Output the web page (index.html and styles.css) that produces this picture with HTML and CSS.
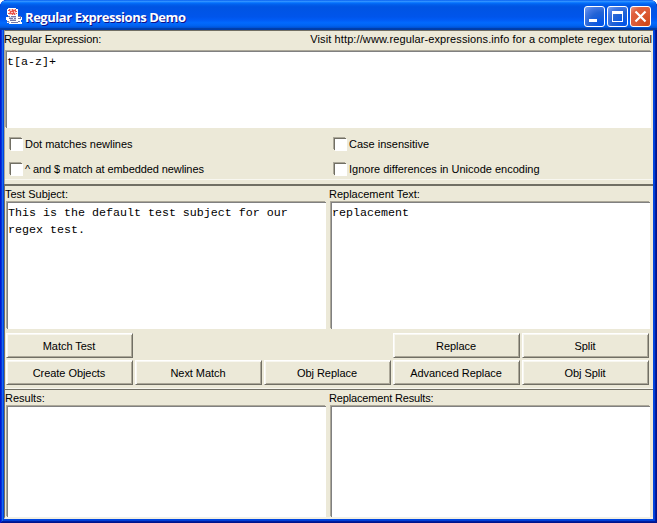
FILE: index.html
```html
<!DOCTYPE html>
<html lang="en">
<head>
<meta charset="utf-8">
<title>Regular Expressions Demo</title>
<link rel="stylesheet" href="styles.css">
</head>
<body>
<main class="window">
  <header class="titlebar">
    <svg class="app-icon" width="16" height="16" viewBox="0 0 16 16" shape-rendering="crispEdges">
      <path fill="#fff" d="M2 0h8v1h2v7h3v1h1v3h-1v2h1v2H3v-1H1v-3H0V9h2V7H1V1h1z"/>
      <path fill="#f8c4c0" d="M3 1h7v6H3z"/>
      <path fill="none" stroke="#e8544c" d="M2 2.500h2M3.500 1v2M2 5.500h2M6.500 1v2h-2v2h2v2M9.500 1v1h-2v3h1v2M9 3.500h2M10 5.500h1"/>
      <path fill="none" stroke="#7778a5" d="M2 8.500h2M5 8.500h5M12 8.500h2v2h-2M3 10.500h4M8 10.500h2M4 12.500h6M1 13.500h2M5 14.500h7M12 13.500h2"/>
      <path fill="#c4c4dd" d="M3 9h7v1H3zM4 11h6v1H4zM2 14h2v1H2z"/>
    </svg>
    <h1 class="title">Regular Expressions Demo</h1>
    <div class="controls">
      <span class="control"><svg width="21" height="21"><path fill="#fff" d="M5 13h8v3H5z"/></svg></span>
      <span class="control"><svg width="21" height="21"><path fill="#fff" fill-rule="evenodd" d="M5 5h11v11H5zM6 8v7h9V8z"/></svg></span>
      <span class="control close"><svg width="21" height="21"><path stroke="#fff" stroke-width="2.200" d="M5.500 5.500l10 10M15.500 5.500l-10 10"/></svg></span>
    </div>
  </header>
  <div class="content">
    <section class="pattern">
      <div class="heading"><span class="l-regex">Regular Expression:</span><span class="l-visit">Visit http://www.regular-expressions.info for a complete regex tutorial</span></div>
      <div class="field regex">t[a-z]+</div>
      <div class="options">
        <label class="option"><i class="box"></i><span>Dot matches newlines</span></label>
        <label class="option"><i class="box"></i><span>Case insensitive</span></label>
        <label class="option"><i class="box"></i><span class="l-caret">^ and $ match at embedded newlines</span></label>
        <label class="option"><i class="box"></i><span>Ignore differences in Unicode encoding</span></label>
      </div>
    </section>
    <section class="subject">
      <div class="pair">
        <div class="cell"><div class="label">Test Subject:</div><div class="field">This is the default test subject for our<br>regex test.</div></div>
        <div class="cell"><div class="label">Replacement Text:</div><div class="field">replacement</div></div>
      </div>
      <div class="buttons">
        <button>Match Test</button><span></span><span></span><button>Replace</button><button>Split</button>
        <button>Create Objects</button><button>Next Match</button><button>Obj Replace</button><button>Advanced Replace</button><button>Obj Split</button>
      </div>
    </section>
    <section class="results">
      <div class="pair">
        <div class="cell"><div class="label">Results:</div><div class="field"></div></div>
        <div class="cell"><div class="label l-results">Replacement Results:</div><div class="field"></div></div>
      </div>
    </section>
  </div>
</main>
</body>
</html>
```
FILE: styles.css
```css
* { box-sizing: border-box; }
body { margin: 0; background: #fff; font: 11px/14px "Liberation Sans", Arial, sans-serif; color: #000; }
.window {
  width: 657px; height: 523px; display: flex; flex-direction: column; overflow: hidden;
  padding: 0 4px 4px; border-radius: 7px 7px 0 0;
  background: #0046e0;
  box-shadow: inset 1px 0 #0019cf, inset -1px -1px #00138c, inset 2px 0 #0831d9, inset -2px -2px #001ea0, inset 3px 0 #166aee, inset -3px -3px #0040d8;
}
.titlebar {
  flex: none; height: 30px; margin: 0 -4px; padding: 2px 6px 0; display: flex; align-items: center;
  background: linear-gradient(#0058ee 0, #3593ff 4%, #288eff 6%, #127dff 8%, #036ffc 10%, #0262ee 14%, #0057e5 20%, #0054e3 24%, #0055eb 56%, #005bf5 66%, #026afe 76%, #0062ef 86%, #0052d6 92%, #0040ab 94%, #003ba8 100%);
}
.app-icon { flex: none; }
.title { flex: 1; margin: 1px 0 0 3px; font: bold 13px/20px "Open Sans", "Noto Sans", sans-serif; letter-spacing: -.45px; color: #fff; text-shadow: 1px 1px #0f1089; white-space: nowrap; }
.controls { display: flex; gap: 2px; padding-top: 1px; }
.control { width: 21px; height: 21px; border: 1px solid #fff; border-radius: 3px; background: radial-gradient(circle at 85% 90%, #0054e9 0, #2263d5 50%, #4479e4 75%, #7aa2ee 100%); }
.control svg { display: block; margin: -1px; }
.control.close { background: radial-gradient(circle at 85% 90%, #d04818 0, #dc5a34 50%, #e0603f 75%, #e89a88 100%); }
.content { flex: 1; display: flex; flex-direction: column; background: #ece9d8; }
.pattern { height: 154px; border-top: 1px solid #716f64; border-left: 1px solid #aca899; box-shadow: inset 0 -4px #ece9d8, inset 0 -5px #f8f7f0; }
.heading { height: 19px; display: flex; justify-content: space-between; padding: 1px 1px 0 0; margin-left: -1px; white-space: nowrap; }
.l-regex { letter-spacing: -.1px; }
.l-visit { letter-spacing: .105px; }
.l-caret { letter-spacing: -.09px; }
.l-results { letter-spacing: -.16px; }
.field {
  background: #fff; border: solid #808080; border-width: 1px 0 0 1px; box-shadow: -1px -1px #aca899;
  padding: 2px 0 0; font: 11.67px/17px "Liberation Mono", monospace;
}
.regex { height: 77px; margin: 1px 2px 0 1px; }
.options { display: grid; grid-template-columns: 324px 1fr; grid-auto-rows: 25px; padding: 3px 0 0 5px; }
.option { display: flex; align-items: center; gap: 3px; white-space: nowrap; }
.box { width: 12px; height: 12px; background: #fff; border: solid #716f64; border-width: 1px 0 0 1px; box-shadow: -1px -1px #aca899, 1px 1px #fff; }
.subject { height: 205px; border-top: 2px solid #716f64; border-left: 1px solid #716f64; box-shadow: inset 0 -1px #f8f7f0; }
.pair { display: grid; grid-template-columns: 324px 323px; }
.cell { display: flex; flex-direction: column; }
.label { height: 15px; padding-top: 1px; white-space: nowrap; }
.subject .pair { height: 143px; }
.cell .field { flex: 1; margin: 1px 3px 0 2px; }
.cell + .cell .field { margin-right: 2px; }
.buttons { display: grid; grid-template-columns: repeat(5, 127px); grid-auto-rows: 25px; gap: 2px; padding: 4px 0 0 1px; }
button { border: 1px solid; border-color: #fff #716f64 #716f64 #fff; box-shadow: inset 1px 1px #f8f7f0, inset -1px -1px #aca899; background: #ece9d8; color: #000; font: inherit; letter-spacing: -.05px; padding: 0 1px 0 0; }
.results { flex: 1; border-top: 1px solid #716f64; border-left: 1px solid #716f64; border-bottom: 2px solid #f2f0e4; display: flex; }
.results .pair { flex: 1; }
```
